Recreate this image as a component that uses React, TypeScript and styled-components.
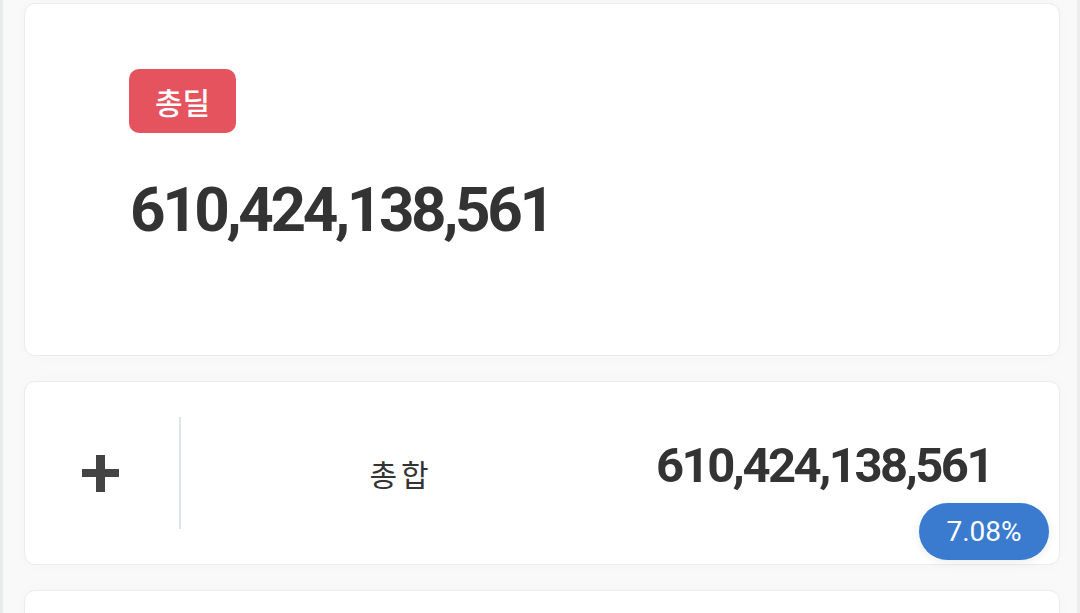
import React from "react";
import styled, { createGlobalStyle } from "styled-components";

const Global = createGlobalStyle`
  html, body { margin: 0; padding: 0; background: #f9f9f9; }
  body { font-family: Roboto, "Noto Sans CJK KR", sans-serif; }
`;

const Page = styled.div`
  width: 1080px;
  height: 613px;
  box-sizing: border-box;
  overflow: hidden;
  border-left: 3px solid #e8ecec;
  border-right: 3px solid #eceeee;
  background: #f9f9f9;
  padding: 3px 17px 0 21px;
  display: flex;
  flex-direction: column;
  gap: 25px;
`;

const Card = styled.div<{ $h: number }>`
  flex: none;
  height: ${(p) => p.$h}px;
  box-sizing: border-box;
  background: #fff;
  border: 1.5px solid #ececec;
  border-radius: 11px;
  box-shadow: 0 0 14px rgba(0, 0, 0, 0.025);
`;

const TotalCard = styled(Card)`
  display: flex;
  flex-direction: column;
  align-items: flex-start;
  padding: 65px 0 0 104px;
`;

const Badge = styled.div`
  background: #e5535f;
  color: #fff;
  width: 107px;
  height: 64px;
  border-radius: 10px;
  display: flex;
  align-items: center;
  justify-content: center;
  font-family: "Noto Sans CJK KR", sans-serif;
  font-size: 30px;
  font-weight: 500;
`;

const BigNumber = styled.div`
  margin-top: 46px;
  margin-left: 1px;
  color: #333;
  font-family: Roboto, sans-serif;
  font-weight: 700;
  font-size: 62px;
  letter-spacing: -3.4px;
  line-height: 1;
`;

const SumCard = styled(Card)`
  position: relative;
  display: flex;
  align-items: center;
`;

const PlusCell = styled.div`
  width: 150px;
  align-self: stretch;
  display: flex;
  align-items: center;
  justify-content: center;
  padding-top: 0;
  box-sizing: border-box;
`;

const Divider = styled.div`
  width: 2px;
  height: 112px;
  background: #e1e4e4;
  margin-left: 4px;
`;

const Label = styled.div`
  width: 440px;
  text-align: center;
  padding-top: 0;
  color: #333;
  font-family: "Noto Sans CJK KR", sans-serif;
  font-size: 30px;
  letter-spacing: 4px;
`;

const SumNumber = styled.div`
  margin-left: 35px;
  margin-top: -16px;
  color: #333;
  font-family: Roboto, sans-serif;
  font-weight: 700;
  font-size: 49px;
  letter-spacing: -2.5px;
  line-height: 1;
`;

const Pill = styled.div`
  position: absolute;
  right: 10px;
  bottom: 4px;
  width: 130px;
  height: 57px;
  border-radius: 29px;
  background: #3a7bd0;
  color: #fff;
  display: flex;
  align-items: center;
  justify-content: center;
  font-family: Roboto, sans-serif;
  font-size: 28px;
  box-shadow: 0 2px 10px rgba(0, 0, 0, 0.08);
`;

const Plus = () => (
  <svg width="37" height="37" viewBox="0 0 37 37">
    <rect x="14" y="0" width="9" height="37" fill="#444" />
    <rect x="0" y="14" width="37" height="8" fill="#444" />
  </svg>
);

export default function App() {
  return (
    <>
      <Global />
      <Page>
        <TotalCard $h={353}>
          <Badge>총딜</Badge>
          <BigNumber>610,424,138,561</BigNumber>
        </TotalCard>
        <SumCard $h={184}>
          <PlusCell>
            <Plus />
          </PlusCell>
          <Divider />
          <Label>총합</Label>
          <SumNumber>610,424,138,561</SumNumber>
          <Pill>7.08%</Pill>
        </SumCard>
        <Card $h={120} />
      </Page>
    </>
  );
}
